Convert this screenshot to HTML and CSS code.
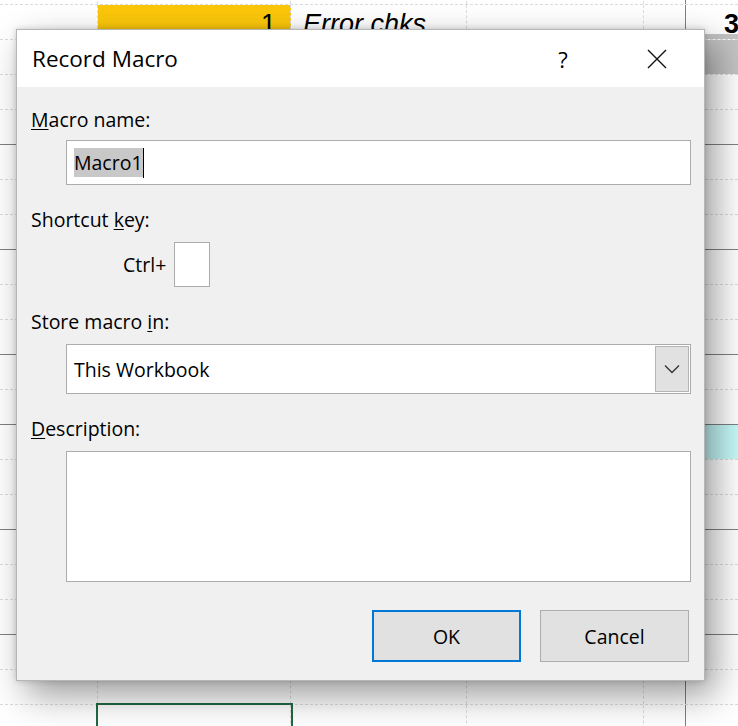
FILE: index.html
```html
<!DOCTYPE html>
<html>
<head>
<meta charset="utf-8">
<link rel="stylesheet" href="styles.css">
</head>
<body>
<div class="sheet">
  <div class="row"><span></span><span></span><span></span><span></span><span></span><span></span></div>
  <div class="row"><span></span><span class="num yellow">1</span><span class="italic">Error chks</span><span></span><span></span><span class="bold top-gray">3</span></div>
  <div class="row"><span></span><span></span><span></span><span></span><span></span><span class="gray"></span></div>
  <div class="row"><span></span><span></span><span></span><span></span><span></span><span></span></div>
  <div class="row solid"><span></span><span></span><span></span><span></span><span></span><span></span></div>
  <div class="row"><span></span><span></span><span></span><span></span><span></span><span></span></div>
  <div class="row"><span></span><span></span><span></span><span></span><span></span><span></span></div>
  <div class="row solid"><span></span><span></span><span></span><span></span><span></span><span></span></div>
  <div class="row"><span></span><span></span><span></span><span></span><span></span><span></span></div>
  <div class="row"><span></span><span></span><span></span><span></span><span></span><span></span></div>
  <div class="row solid"><span></span><span></span><span></span><span></span><span></span><span></span></div>
  <div class="row"><span></span><span></span><span></span><span></span><span></span><span></span></div>
  <div class="row solid"><span></span><span></span><span></span><span></span><span></span><span></span></div>
  <div class="row"><span></span><span></span><span></span><span></span><span></span><span class="cyan"></span></div>
  <div class="row"><span></span><span></span><span></span><span></span><span></span><span></span></div>
  <div class="row solid"><span></span><span></span><span></span><span></span><span></span><span></span></div>
  <div class="row"><span></span><span></span><span></span><span></span><span></span><span></span></div>
  <div class="row"><span></span><span></span><span></span><span></span><span></span><span></span></div>
  <div class="row solid"><span></span><span></span><span></span><span></span><span></span><span></span></div>
  <div class="row"><span></span><span></span><span></span><span></span><span></span><span></span></div>
  <div class="row"><span></span><span></span><span></span><span></span><span></span><span></span></div>
  <div class="row"><span></span><span class="active"></span><span></span><span></span><span></span><span></span></div>
</div>

<div class="dialog">
  <div class="titlebar">
    <span class="title">Record Macro</span>
    <span class="tbtn help">?</span>
    <span class="tbtn close">
      <svg width="20" height="20" viewBox="0 0 20 20"><path d="M1 1 L19 19 M19 1 L1 19" stroke="#111" stroke-width="1.4" fill="none"/></svg>
    </span>
  </div>
  <div class="body">
    <div class="lbl first"><u>M</u>acro name:</div>
    <div class="field"><span class="sel">Macro1</span><span class="caret"></span></div>
    <div class="lbl">Shortcut <u>k</u>ey:</div>
    <div class="shortcut"><span>Ctrl+</span><div class="keybox"></div></div>
    <div class="lbl">Store macro <u>i</u>n:</div>
    <div class="select">
      <span class="value">This Workbook</span>
      <div class="arrow"><svg width="16" height="10" viewBox="0 0 16 10"><polyline points="1,1.5 8,8.5 15,1.5" stroke="#333" stroke-width="1.3" fill="none"/></svg></div>
    </div>
    <div class="lbl"><u>D</u>escription:</div>
    <div class="textarea"></div>
    <div class="buttons">
      <div class="btn ok">OK</div>
      <div class="btn">Cancel</div>
    </div>
  </div>
</div>
</body>
</html>
```

FILE: styles.css
```css
html, body {
  margin: 0;
  padding: 0;
}
body {
  width: 738px;
  height: 726px;
  overflow: hidden;
  background: #ffffff;
  position: relative;
  font-family: "Open Sans", "Noto Sans", sans-serif;
}

/* spreadsheet background */
.sheet {
  margin-top: -30px;
  font-family: "Liberation Sans", Arial, sans-serif;
}
.row {
  display: grid;
  grid-template-columns: 98px 193px 176px 177px 42px 52px;
  height: 35px;
  box-sizing: border-box;
  border-bottom: 1px dashed #dcdcdc;
}
.row.solid {
  border-bottom: 1px solid #808080;
}
.row > span {
  border-right: 1px dashed #dcdcdc;
  font-size: 27px;
  line-height: 38px;
  color: #000;
  white-space: nowrap;
  overflow: hidden;
}
.row > span:nth-child(5) {
  border-right: 1px solid #808080;
}
.row > span:nth-child(6) {
  border-right: 0;
}
.yellow {
  background: #fcc70a;
}
.num {
  text-align: right;
  padding-right: 14px;
}
.italic {
  font-style: italic;
  padding-left: 12px;
}
.bold {
  font-weight: bold;
  padding-left: 38px;
}
.top-gray {
  background: linear-gradient(to bottom, transparent 29px, #c4c4c4 29px);
}
.gray {
  background: #c4c4c4;
}
.cyan {
  background: #c6fafa;
}
.active {
  outline: 2px solid #1f6b41;
  outline-offset: 0;
}

/* dialog */
.dialog {
  position: absolute;
  left: 16px;
  top: 29px;
  width: 689px;
  height: 652px;
  box-sizing: border-box;
  border: 1px solid #b6b6b6;
  background: #f0f0f0;
  box-shadow: 0 0 6px rgba(0, 0, 0, 0.18), 10px 14px 34px rgba(0, 0, 0, 0.4);
  display: flex;
  flex-direction: column;
  color: #000;
  font-size: 19.5px;
}
.titlebar {
  height: 57px;
  flex: none;
  background: #ffffff;
  display: flex;
  align-items: center;
  padding-left: 15px;
}
.title {
  flex: 1;
  font-size: 22.5px;
}
.tbtn {
  width: 94px;
  height: 57px;
  display: flex;
  align-items: center;
  justify-content: center;
}
.help {
  font-size: 22px;
}
.body {
  padding: 0 13px 18px 14px;
  display: flex;
  flex-direction: column;
}
.lbl {
  line-height: 26px;
  margin-top: 22px;
}
.lbl.first {
  margin-top: 20px;
}
u {
  text-decoration-thickness: 1px;
  text-underline-offset: 2px;
}
.field {
  margin: 7px 0 0 35px;
  height: 45px;
  box-sizing: border-box;
  border: 1px solid #acacac;
  background: #ffffff;
  display: flex;
  align-items: center;
  padding-left: 7px;
}
.sel {
  background: #c8c8c8;
  line-height: 29px;
}
.caret {
  width: 1px;
  height: 30px;
  background: #000;
}
.shortcut {
  margin-top: 9px;
  padding-left: 92px;
  display: flex;
  align-items: center;
  gap: 8px;
}
.keybox {
  width: 36px;
  height: 45px;
  box-sizing: border-box;
  border: 1px solid #acacac;
  background: #ffffff;
}
.select {
  margin: 9px 0 0 35px;
  height: 50px;
  box-sizing: border-box;
  border: 1px solid #acacac;
  background: #ffffff;
  display: flex;
}
.value {
  flex: 1;
  display: flex;
  align-items: center;
  padding-left: 7px;
}
.arrow {
  width: 34px;
  margin: 1px;
  box-sizing: border-box;
  border: 1px solid #b5b5b5;
  background: #e1e1e1;
  display: flex;
  align-items: center;
  justify-content: center;
}
.textarea {
  margin: 9px 0 0 35px;
  height: 131px;
  box-sizing: border-box;
  border: 1px solid #acacac;
  background: #ffffff;
}
.buttons {
  margin-top: 28px;
  display: flex;
  justify-content: flex-end;
  gap: 19px;
  padding-right: 2px;
}
.btn {
  width: 149px;
  height: 52px;
  box-sizing: border-box;
  border: 1px solid #adadad;
  background: #e1e1e1;
  display: flex;
  align-items: center;
  justify-content: center;
}
.btn.ok {
  border: 2px solid #0078d7;
}
```
